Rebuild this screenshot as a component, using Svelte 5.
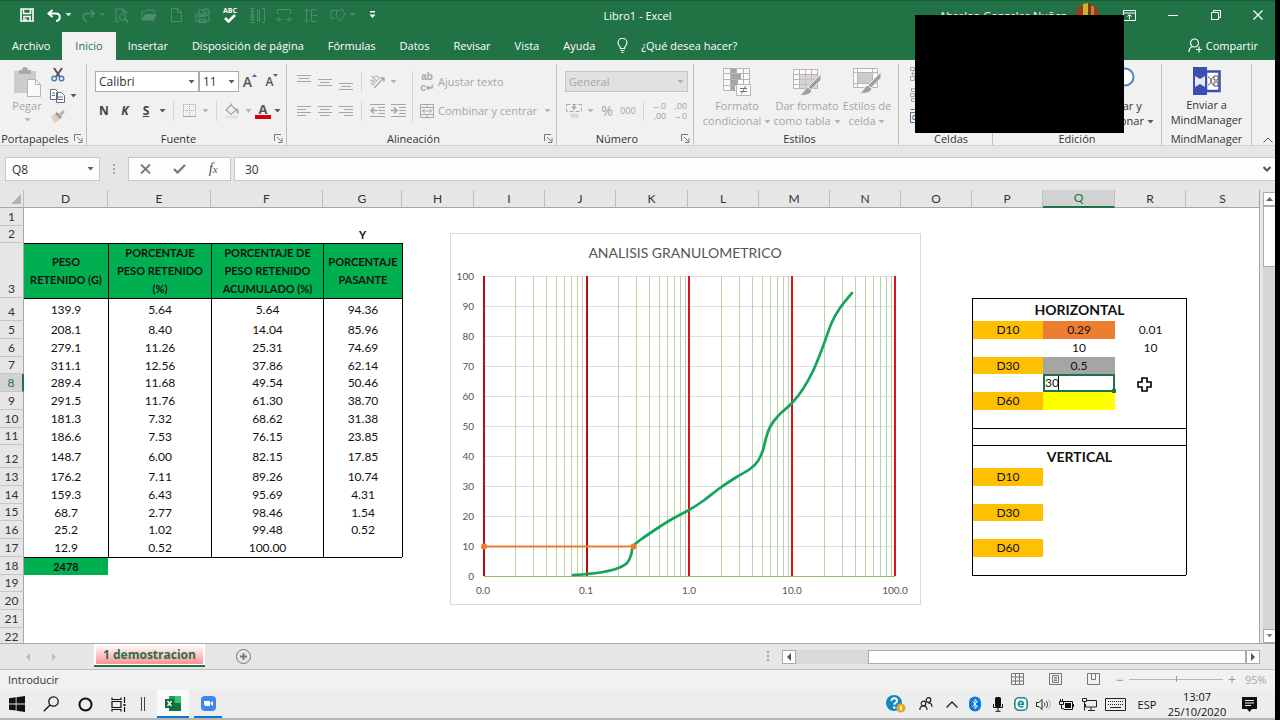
<script lang="ts">
  type Cell = { text?: string; cls?: string; span?: number; edit?: boolean };
  type Row = { n: number; h: number; cells: Record<string, Cell> };

  const tabs = ['Archivo', 'Inicio', 'Insertar', 'Disposición de página', 'Fórmulas', 'Datos', 'Revisar', 'Vista', 'Ayuda'];

  const columns = [
    { id: 'D', w: 84 },
    { id: 'E', w: 103 },
    { id: 'F', w: 112 },
    { id: 'G', w: 79 },
    { id: 'H', w: 72 },
    { id: 'I', w: 71 },
    { id: 'J', w: 71 },
    { id: 'K', w: 72 },
    { id: 'L', w: 71 },
    { id: 'M', w: 71 },
    { id: 'N', w: 71 },
    { id: 'O', w: 71 },
    { id: 'P', w: 71 },
    { id: 'Q', w: 72 },
    { id: 'R', w: 71 },
    { id: 'S', w: 74 }
  ];

  const heights = [18, 17, 55, 23, 18, 18, 17, 18, 18, 18, 17, 23, 18, 18, 17, 18, 18, 18, 17, 18, 18, 18];

  const data = [
    ['139.9', '5.64', '5.64', '94.36'],
    ['208.1', '8.40', '14.04', '85.96'],
    ['279.1', '11.26', '25.31', '74.69'],
    ['311.1', '12.56', '37.86', '62.14'],
    ['289.4', '11.68', '49.54', '50.46'],
    ['291.5', '11.76', '61.30', '38.70'],
    ['181.3', '7.32', '68.62', '31.38'],
    ['186.6', '7.53', '76.15', '23.85'],
    ['148.7', '6.00', '82.15', '17.85'],
    ['176.2', '7.11', '89.26', '10.74'],
    ['159.3', '6.43', '95.69', '4.31'],
    ['68.7', '2.77', '98.46', '1.54'],
    ['25.2', '1.02', '99.48', '0.52'],
    ['12.9', '0.52', '100.00', '']
  ];

  const rows: Row[] = heights.map((h, i) => ({ n: i + 1, h, cells: {} }));

  function put(ref: string, cell: Cell) {
    const row = rows[Number(ref.slice(1)) - 1];
    row.cells[ref[0]] = { ...row.cells[ref[0]], ...cell };
  }

  put('G2', { text: 'Y', cls: 'bold' });
  put('D3', { text: 'PESO RETENIDO (G)', cls: 'head' });
  put('E3', { text: 'PORCENTAJE PESO RETENIDO (%)', cls: 'head line-l' });
  put('F3', { text: 'PORCENTAJE DE PESO RETENIDO ACUMULADO (%)', cls: 'head line-l' });
  put('G3', { text: 'PORCENTAJE PASANTE', cls: 'head line-l' });
  put('H3', { cls: 'line-l' });

  data.forEach((values, i) => {
    const top = i === 0 ? ' line-t' : '';
    values.forEach((text, c) => put('DEFG'[c] + (i + 4), { text, cls: (c ? 'line-l' : '') + top }));
    put('H' + (i + 4), { cls: 'line-l' });
  });
  put('D18', { text: '2478', cls: 'total line-t' });
  for (const c of 'EFG') put(c + '18', { cls: 'line-t' });

  for (let n = 4; n <= 18; n++) {
    put('P' + n, { cls: 'line-l' });
    put('S' + n, { cls: 'line-l' });
  }
  for (const n of [11, 19]) for (const c of 'PQR') put(c + n, { cls: n === 11 && c === 'P' ? 'line-l line-t' : 'line-t' });
  put('P4', { text: 'HORIZONTAL', cls: 'title line-l line-t', span: 3 });
  put('P12', { text: 'VERTICAL', cls: 'title line-l line-t', span: 3 });
  for (const ref of ['P5', 'P7', 'P9', 'P13', 'P15', 'P17']) {
    const label = { 5: 'D10', 7: 'D30', 9: 'D60', 13: 'D10', 15: 'D30', 17: 'D60' }[ref.slice(1)];
    put(ref, { text: label, cls: 'gold line-l' });
  }
  put('Q5', { text: '0.29', cls: 'orange' });
  put('R5', { text: '0.01' });
  put('Q6', { text: '10' });
  put('R6', { text: '10' });
  put('Q7', { text: '0.5', cls: 'gray' });
  put('Q8', { edit: true, cls: 'edit' });
  put('Q9', { cls: 'yellow' });

  function visible(row: Row) {
    const out: { id: string; cell: Cell }[] = [];
    for (let i = 0; i < columns.length; i++) {
      const cell = row.cells[columns[i].id] ?? {};
      out.push({ id: columns[i].id, cell });
      if (cell.span) i += cell.span - 1;
    }
    return out;
  }

  // chart geometry: log x axis from 0.01 to 100, linear y axis 0..100
  const plot = { left: 34, top: 43, decade: 103, height: 300 };
  const right = plot.left + plot.decade * 4 - 1;
  const bottom = plot.top + plot.height;
  const yTicks = [0, 10, 20, 30, 40, 50, 60, 70, 80, 90, 100];
  const xTicks = ['0.0', '0.1', '1.0', '10.0', '100.0'];
  const minor = [0, 1, 2, 3].flatMap((d) =>
    [2, 3, 4, 5, 6, 7, 8, 9].map((m) => Math.round(plot.left + (d + Math.log10(m)) * plot.decade))
  );
  const curve = [
    [123, 342], [137, 341], [153, 339], [167, 335.5], [177, 330], [181, 322], [183.3, 313], [191, 306.5],
    [207, 295.5], [223, 285.5], [239, 277], [253, 268], [270, 255], [285, 245], [300, 236], [308, 228],
    [313, 217], [316, 205], [320, 194], [328, 183], [342, 170], [353, 156], [363, 138], [372, 116],
    [382, 89], [390, 75], [402, 60]
  ];

  function smooth(points: number[][]) {
    let d = `M${points[0].join(' ')}`;
    for (let i = 0; i < points.length - 1; i++) {
      const p0 = points[i - 1] ?? points[i];
      const p1 = points[i];
      const p2 = points[i + 1];
      const p3 = points[i + 2] ?? p2;
      d += `C${p1[0] + (p2[0] - p0[0]) / 6} ${p1[1] + (p2[1] - p0[1]) / 6} ${p2[0] - (p3[0] - p1[0]) / 6} ${p2[1] - (p3[1] - p1[1]) / 6} ${p2[0]} ${p2[1]}`;
    }
    return d;
  }
</script>

{#snippet caret(cls = '')}
  <svg class="caret {cls}" width="7" height="4" viewBox="0 0 7 4"><path d="M0.5 0h6L3.5 3.5z" fill="currentColor" /></svg>
{/snippet}

{#snippet launcher()}
  <button class="launcher" aria-label="Más opciones">
    <svg width="9" height="9" viewBox="0 0 9 9" fill="none" stroke="currentColor"><path d="M0.5 7V0.5H7M3 3l4.5 4.5M8 4v4.5H4" /></svg>
  </button>
{/snippet}

{#snippet lines(y: number, rows: number[][])}
  <svg width="16" height="18" viewBox="0 0 16 18" stroke="currentColor">
    {#each rows as [from, to], i}
      <path d="M{from} {y + i * 3 + 0.5}H{to}" />
    {/each}
  </svg>
{/snippet}

<div class="screen">
  <div class="window">
    <header class="titlebar">
      <div class="quick">
        <button aria-label="Guardar"><svg width="14" height="14" viewBox="0 0 14 14" fill="none" stroke="#fff" stroke-width="1.6"><path d="M1 1h12v12H1zM3.5 1v4.500h7V1M4 13V8.500h6V13M6 10.500v2" /></svg></button>
        <span class="pair">
          <button aria-label="Deshacer"><svg width="15" height="13" viewBox="0 0 15 13" fill="none" stroke="#fff" stroke-width="2"><path d="M5.500 1L1.500 4.500l4 3.500M2 4.500h7c5 0 5 7 0 7.500" /></svg></button>
          {@render caret()}
        </span>
        <span class="pair faded">
          <button aria-label="Rehacer"><svg width="15" height="13" viewBox="0 0 15 13" fill="none" stroke="currentColor" stroke-width="1.6"><path d="M9.500 1l4 3.500-4 3.500M13 4.500H6c-5 0-5 7 0 7.500" /></svg></button>
          {@render caret()}
        </span>
        <button class="faded" aria-label="Vista previa"><svg width="14" height="15" viewBox="0 0 14 15" fill="none" stroke="currentColor" stroke-width="1.200"><path d="M4 13.500H1V1h7l3 3v2M8 1v3h3" /><circle cx="7.500" cy="9" r="3" /><path d="M9.500 11l3.500 3" stroke-width="2" /></svg></button>
        <button class="faded" aria-label="Abrir"><svg width="16" height="12" viewBox="0 0 16 12"><path d="M1 11V2h4l1-1h7v3" fill="none" stroke="currentColor" /><path d="M1 11.500L4 5h11.500L13 11.500z" fill="currentColor" /></svg></button>
        <button class="faded" aria-label="Nuevo"><svg width="11" height="14" viewBox="0 0 11 14" fill="none" stroke="currentColor"><path d="M0.500 0.500h6l4 4v9h-10zM6.500 0.500v4h4" /></svg></button>
        <button class="faded" aria-label="Imprimir"><svg width="16" height="15" viewBox="0 0 16 15" fill="none" stroke="currentColor" stroke-width="1.200"><path d="M4 6V2h4M1 6h10l3 2v5H1zM4 11h7v3.500H4z" /><path d="M3 8h7" stroke-width="2" /><circle cx="11" cy="4" r="3.200" /><path d="M9.500 4l1 1 2-2" /></svg></button>
        <button class="abc" aria-label="Ortografía">
          <span>ABC</span>
          <svg width="12" height="9" viewBox="0 0 12 9" fill="none" stroke="#fff" stroke-width="2.600"><path d="M1 4l3.500 3.500L11 1" /></svg>
        </button>
        <button class="faded" aria-label="Alto de fila"><svg width="16" height="15" viewBox="0 0 16 15" fill="none" stroke="currentColor"><path d="M1 0.500h5M1 14.500h5M3.500 2v11M2 4l1.500-2L5 4M2 11l1.500 2L5 11M2 6.500h3v3H2zM8.500 2h2v11h-2zM12.500 0.500h3v14h-3" /></svg></button>
        <button class="faded" aria-label="Ancho"><svg width="16" height="15" viewBox="0 0 16 15" fill="none" stroke="currentColor"><path d="M1.500 6V1.500h13V6M1 11.500h5M3.500 9L1 11.500 3.500 14M10 11.500h5M12.500 9l2.500 2.500-2.500 2.500" /></svg></button>
        <button class="faded" aria-label="Alto"><svg width="16" height="15" viewBox="0 0 16 15" fill="none" stroke="currentColor"><path d="M3.500 1v13M1 3.500L3.500 1 6 3.500M1 11.500L3.500 14 6 11.500M14 1.500H8.500v12H14M10 7.500h4" /></svg></button>
        <span class="pair faded">
          <button aria-label="Formas"><svg width="16" height="15" viewBox="0 0 16 15" fill="none" stroke="currentColor"><path d="M5 10.500H1v-8h7M7 3l5-2 3 5-5 7-4-5z" /></svg></button>
          {@render caret()}
        </span>
        <button aria-label="Personalizar"><svg width="7" height="8" viewBox="0 0 7 8" fill="#fff"><path d="M1 0h5v1.500H1zM0.500 3.500h6l-3 3.500z" /></svg></button>
      </div>
      <h1>Libro1 - Excel</h1>
      <div class="account">
        <span class="name">Absalon Gonzales Nuñez</span>
        <svg class="avatar" width="23" height="24" viewBox="0 0 23 24"><circle cx="11.500" cy="12" r="11.500" fill="#a5361c" /><path d="M7 1l5-1v22H7z" fill="#c8b432" /><path d="M12 0l5 2v20h-5z" fill="#7a3a10" /><path d="M15 2l3 2v14h-3z" fill="#b08a22" /></svg>
        <button aria-label="Opciones de presentación de la cinta"><svg width="13" height="11" viewBox="0 0 13 11" fill="none" stroke="#fff"><path d="M0.500 0.500h12v10H0.500zM0.500 3h12M6.500 9.500V5M4.500 6.500l2-2 2 2" /></svg></button>
        <button aria-label="Minimizar"><svg width="10" height="10" viewBox="0 0 10 10" stroke="#fff"><path d="M0 5.500h10" /></svg></button>
        <button aria-label="Restaurar"><svg width="10" height="10" viewBox="0 0 10 10" fill="none" stroke="#fff"><path d="M0.500 2.500h7v7h-7zM2.500 2.500v-2h7v7h-2" /></svg></button>
        <button aria-label="Cerrar"><svg width="10" height="10" viewBox="0 0 10 10" stroke="#fff" stroke-width="1.200"><path d="M0.500 0.500l9 9M9.500 0.500l-9 9" /></svg></button>
      </div>
    </header>

    <nav class="tabs">
      {#each tabs as tab}
        <button class:active={tab === 'Inicio'}>{tab}</button>
      {/each}
      <button class="tell">
        <svg width="11" height="15" viewBox="0 0 11 15" fill="none" stroke="#fff" stroke-width="1.100"><path d="M3.500 10.500C3.500 8 1 7.500 1 4.800a4.400 4.400 0 0 1 9 0c0 2.700-2.500 3.200-2.500 5.700zM3.500 12.500h4M4.500 14.500h2" /></svg>
        ¿Qué desea hacer?
      </button>
      <button class="share">
        <svg width="14" height="15" viewBox="0 0 14 15" fill="none" stroke="#fff" stroke-width="1.200"><circle cx="6.500" cy="5" r="4" /><path d="M1 14c0-3 1.500-5 4-5.500M11 8.500v6M8 11.500h6" /></svg>
        Compartir
      </button>
    </nav>

    <section class="ribbon">
      <div class="group clipboard">
        <div class="body">
          <button class="paste">
            <svg width="29" height="31" viewBox="0 0 29 31"><path d="M1 4h22v22H1z" fill="#cfcacd" /><path d="M6 3h3a3 3 0 0 1 6 0h3v4H6z" fill="#a9a9a9" /><path d="M14.500 12.500h8l5 5v12h-13z" fill="#fafafa" stroke="#b5b5b5" /><path d="M22.500 12.500v5h5" fill="none" stroke="#b5b5b5" /></svg>
            <span>Pegar</span>
            {@render caret()}
          </button>
          <div class="stack">
            <button aria-label="Cortar"><svg width="14" height="15" viewBox="0 0 14 15" fill="none" stroke-width="1.400"><path d="M3 1l6 9M11 1L5 10" stroke="#555" stroke-width="2" /><circle cx="3.200" cy="11.500" r="2.300" stroke="#4a7ab0" /><circle cx="10.500" cy="11.500" r="2.300" stroke="#4a7ab0" /></svg></button>
            <span class="pair">
              <button aria-label="Copiar"><svg width="15" height="14" viewBox="0 0 15 14" fill="#fff" stroke="#5f6b78"><path d="M0.500 0.500h5l2 2v8h-7zM2 4h3M2 6.500h3M6.500 3.500h5l3 3v7h-8z" /><path d="M8 8h5M8 10.500h5" /></svg></button>
              {@render caret()}
            </span>
            <button aria-label="Copiar formato"><svg width="15" height="13" viewBox="0 0 15 13"><path d="M1 6l4-2 5 5-3 3-3 1z" fill="#e3cfc0" /><path d="M5 4l2-2 5 5-2 2z" fill="#9a9a9a" /><path d="M9 4l4-4 2 2-4 4z" fill="#b5b5b5" /></svg></button>
          </div>
        </div>
        <footer><span>Portapapeles</span>{@render launcher()}</footer>
      </div>

      <div class="group font">
        <div class="body rows">
          <div class="line">
            <label class="combo family"><select aria-label="Fuente"><option>Calibri</option></select>{@render caret()}</label>
            <label class="combo size"><select aria-label="Tamaño"><option>11</option></select>{@render caret()}</label>
            <button class="grow" aria-label="Aumentar tamaño"><b>A</b><svg width="5" height="3" viewBox="0 0 5 3"><path d="M0 3h5L2.500 0z" fill="#3f6da5" /></svg></button>
            <button class="grow small" aria-label="Disminuir tamaño"><b>A</b><svg width="5" height="3" viewBox="0 0 5 3"><path d="M0 0h5L2.500 3z" fill="#3f6da5" /></svg></button>
          </div>
          <div class="line tools">
            <button class="letter">N</button>
            <button class="letter italic">K</button>
            <button class="letter under">S</button>
            {@render caret()}
            <i class="sep"></i>
            <button class="off" aria-label="Bordes"><svg width="13" height="13" viewBox="0 0 13 13" fill="none" stroke="currentColor"><path d="M0.500 0.500h12v12M0.500 0.500v12M6.500 0v12M0 6.500h12" stroke-dasharray="1 1" /><path d="M0 12.500h13" /></svg></button>
            {@render caret('off')}
            <i class="sep"></i>
            <button class="off" aria-label="Color de relleno"><svg width="16" height="16" viewBox="0 0 16 16" fill="none" stroke="currentColor" stroke-width="1.300"><path d="M2 7l5-5 5 5-5 4.500zM7 2V0.500" /><path d="M12 6c2 1 2 3 1.500 4.500" stroke-width="2" /><path d="M1 14h13" stroke="#e2e2e2" stroke-width="3" /></svg></button>
            {@render caret('off')}
            <button class="color"><b>A</b></button>
            {@render caret()}
          </div>
        </div>
        <footer><span>Fuente</span>{@render launcher()}</footer>
      </div>

      <div class="group align off">
        <div class="body">
          <div class="rows">
            <div class="line tools">
              <button aria-label="Alinear arriba">{@render lines(2, [[1, 15], [3, 13], [1, 15]])}</button>
              <button aria-label="Alinear en medio">{@render lines(6, [[1, 15], [3, 13], [1, 15]])}</button>
              <button aria-label="Alinear abajo">{@render lines(10, [[1, 15], [3, 13], [1, 15]])}</button>
              <i class="sep"></i>
              <button class="turn" aria-label="Orientación"><span>ab</span><svg width="15" height="15" viewBox="0 0 15 15" fill="none" stroke="currentColor" stroke-width="1.300"><path d="M4 14L14 4M10 4h4v4" /></svg></button>
              {@render caret()}
            </div>
            <div class="line tools">
              <button aria-label="Izquierda">{@render lines(4, [[1, 15], [1, 10], [1, 15], [1, 10]])}</button>
              <button aria-label="Centrar">{@render lines(4, [[1, 15], [3, 13], [1, 15], [3, 13]])}</button>
              <button aria-label="Derecha">{@render lines(4, [[1, 15], [6, 15], [1, 15], [6, 15]])}</button>
              <i class="sep"></i>
              <button aria-label="Disminuir sangría"><svg width="15" height="13" viewBox="0 0 15 13" fill="none" stroke="currentColor"><path d="M0 0.500h15M8 3.500h7M8 6.500h7M8 9.500h7M0 12.500h15" /><path d="M7 6.500H1M4 3.500l-3 3 3 3" stroke-width="1.500" /></svg></button>
              <button aria-label="Aumentar sangría"><svg width="15" height="13" viewBox="0 0 15 13" fill="none" stroke="currentColor"><path d="M0 0.500h15M8 3.500h7M8 6.500h7M8 9.500h7M0 12.500h15" /><path d="M0 6.500h6M3 3.500l3 3-3 3" stroke-width="1.500" /></svg></button>
            </div>
          </div>
          <i class="sep tall"></i>
          <div class="rows texts">
            <button class="wide"><span class="wrap">ab<br />c↵</span>Ajustar texto</button>
            <button class="wide"><svg width="14" height="14" viewBox="0 0 14 14" fill="none" stroke="currentColor"><path d="M0.500 0.500h13v13H0.500zM0.500 3.500h13M0.500 10.500h13M7 0.500v3M7 10.500v3M2.500 7h9M4.500 5l-2 2 2 2M9.500 5l2 2-2 2" /></svg>Combinar y centrar<span class="gap">{@render caret()}</span></button>
          </div>
        </div>
        <footer><span>Alineación</span>{@render launcher()}</footer>
      </div>

      <div class="group number off">
        <div class="body rows">
          <label class="combo general"><select aria-label="Formato de número" disabled><option>General</option></select>{@render caret()}</label>
          <div class="line tools">
            <button aria-label="Moneda"><svg width="16" height="14" viewBox="0 0 16 14" fill="none" stroke="currentColor"><path d="M0.500 0.500h15v7H0.500z" stroke-dasharray="4 2" /><path d="M8 2v4M6 4l2-2 2 2" stroke-width="1.500" /><path d="M4 10.500h8M5 12.500h8" stroke="#dadada" stroke-width="2" /></svg></button>
            {@render caret()}
            <button class="percent">%</button>
            <button class="zeros">000</button>
            <i class="sep"></i>
            <button class="decimals" aria-label="Aumentar decimales"><span>←0</span><span>,00</span></button>
            <button class="decimals" aria-label="Disminuir decimales"><span>,00</span><span>→0</span></button>
          </div>
        </div>
        <footer><span>Número</span>{@render launcher()}</footer>
      </div>

      <div class="group styles off">
        <div class="body">
          <button class="big">
            <svg width="29" height="29" viewBox="0 0 29 29" fill="#fafafa" stroke="#bcb3ba"><path d="M0.500 1.500h26v22H0.500zM0.500 6.500h26M0.500 12.500h26M0.500 18.500h26M7.500 1v22M13.500 1v22M20.500 1v22" /><path d="M8 2h5v4H8zM8 7h10v5H8zM8 13h7v5H8zM8 19h4v4H8z" fill="#a5a5a8" stroke="none" /><path d="M13.500 17.500h14v11h-14z" /><path d="M17 21.500h7M17 24.500h7M22.500 19l-4 8" stroke="#777" /></svg>
            <span>Formato<br />condicional {@render caret()}</span>
          </button>
          <button class="big mid">
            <svg width="29" height="29" viewBox="0 0 29 29" fill="#fafafa" stroke="#bcb3ba"><path d="M0.500 2.500h24v19H0.500zM0.500 7.500h24M0.500 12.500h24M0.500 17.500h24M6.500 2v19M12.500 2v19M18.500 2v19" /><path d="M7 8h17v13H7z" fill="#c9c3c9" fill-opacity=".7" stroke="none" /><path d="M28 7v6L18 23l-3-3z" fill="#a0a0a0" stroke="#f1f1f1" /><path d="M15 20l4 4c-2 4-7 5-12 4 4-2 4-7 8-8z" fill="#a0a0a0" stroke="#f1f1f1" /></svg>
            <span>Dar formato<br />como tabla {@render caret()}</span>
          </button>
          <button class="big last">
            <svg width="29" height="29" viewBox="0 0 29 29" fill="#fafafa" stroke="#bcb3ba"><path d="M0.500 1.500h24v19H0.500zM0.500 5.500h24M0.500 16.500h24M4.500 1v19M19.500 1v19" /><path d="M5 6h14v10H5z" fill="#cfcacf" stroke="none" /><path d="M28 5v6L18 21l-3-3z" fill="#a0a0a0" stroke="#f1f1f1" /><path d="M15 18l4 4c-2 4-7 5-12 4 4-2 4-7 8-8z" fill="#a0a0a0" stroke="#f1f1f1" /></svg>
            <span>Estilos de<br />celda {@render caret()}</span>
          </button>
        </div>
        <footer><span>Estilos</span></footer>
      </div>

      <div class="group cells">
        <div class="body">
          <div class="stack">
            <button class="off" aria-label="Insertar celdas"><svg width="14" height="14" viewBox="0 0 14 14" fill="none" stroke="currentColor"><path d="M0.500 0.500h4v3h-4zM0.500 9.500h4v4h-4zM2 6.500h8M4 4L1.500 6.500 4 9" /></svg></button>
            <button class="off" aria-label="Eliminar celdas"><svg width="14" height="14" viewBox="0 0 14 14" fill="none" stroke="currentColor"><path d="M1.500 0.500h4v3h-4zM0.500 5.500h4v3h-4zM1.500 10.500h4v3h-4z" /></svg></button>
            <button aria-label="Formato de celdas"><svg width="14" height="14" viewBox="0 0 14 14" fill="none" stroke="#4f6f8f"><path d="M0.500 0.500h5M0.500 3.500h13v10H0.500zM3 6.500h8v4H3z" /></svg></button>
          </div>
        </div>
        <footer><span>Celdas</span></footer>
      </div>

      <div class="group editing">
        <div class="body">
          <button class="big">
            <svg width="29" height="29" viewBox="0 0 29 29" fill="#fff" stroke="#4f86c6" stroke-width="2"><circle cx="19" cy="10" r="8.500" /><path d="M13 16L3 27" /></svg>
            <span>Buscar y<br />seleccionar {@render caret()}</span>
          </button>
        </div>
        <footer><span>Edición</span></footer>
      </div>

      <div class="group mind">
        <div class="body">
          <button class="big">
            <svg width="28" height="28" viewBox="0 0 28 28"><path d="M13 4.500h13.500v19.500H13z" fill="#fff" stroke="#3a4fb0" stroke-width="2.500" /><path d="M0 0h14v28H0z" fill="#3a4fb0" /><path d="M2 9l5 3 5-3v11l-5-3-5 3z" fill="#e6e8f2" /><path d="M15 10c4 0 2 8 6 8M15 18c4 0 2-8 6-8M21 9h4v4h-4zM21 15h4v4h-4z" fill="none" stroke="#555" /></svg>
            <span>Enviar a<br />MindManager</span>
          </button>
        </div>
        <footer><span>MindManager</span></footer>
      </div>
      <div class="tail">
        <button aria-label="Contraer la cinta"><svg width="10" height="6" viewBox="0 0 10 6" fill="none" stroke="#555"><path d="M0.500 5.500l4.500-4.500 4.500 4.500" /></svg></button>
      </div>
    </section>

    <section class="formula">
      <label class="namebox"><input aria-label="Cuadro de nombres" value="Q8" />{@render caret()}</label>
      <span class="dots"></span>
      <div class="fx">
        <button aria-label="Cancelar"><svg width="11" height="10" viewBox="0 0 11 10" stroke="#777" stroke-width="1.800"><path d="M1 0.500l9 9M10 0.500l-9 9" /></svg></button>
        <button aria-label="Introducir"><svg width="13" height="10" viewBox="0 0 13 10" fill="none" stroke="#777" stroke-width="2.200"><path d="M1 5l3.500 3.500L12 1" /></svg></button>
        <button class="fn"><i>f<sub>x</sub></i></button>
      </div>
      <label class="bar">
        <input aria-label="Barra de fórmulas" value="30" />
        <svg width="8" height="6" viewBox="0 0 8 6" fill="none" stroke="#555" stroke-width="2"><path d="M0.500 1L4 4.500 7.500 1" /></svg>
      </label>
    </section>

    <main class="sheet">
      <div class="grid">
        <table>
          <colgroup>
            <col class="corner-col" />
            {#each columns as col}<col style="width: {col.w}px" />{/each}
          </colgroup>
          <thead>
            <tr>
              <th class="corner"><svg width="10" height="10" viewBox="0 0 10 10"><path d="M10 0v10H0z" fill="#b4b4b4" /></svg></th>
              {#each columns as col}<th class:current={col.id === 'Q'}>{col.id}</th>{/each}
            </tr>
          </thead>
          <tbody>
            {#each rows as row}
              <tr style="height: {row.h}px">
                <th class:current={row.n === 8}>{row.n}</th>
                {#each visible(row) as { cell }}
                  <td class={cell.cls} colspan={cell.span ?? 1}>
                    {#if cell.edit}
                      <div class="editor"><input aria-label="Celda Q8" value="30" /><i></i></div>
                    {:else}{cell.text ?? ''}{/if}
                  </td>
                {/each}
              </tr>
            {/each}
          </tbody>
        </table>

        <svg class="chart" width="471" height="372" viewBox="0 0 471 372" role="img" aria-label="Analisis granulometrico">
          <rect x="0.500" y="0.500" width="470" height="371" fill="#fff" stroke="#d9d9d9" />
          <text class="chart-title" x="235" y="25" text-anchor="middle">ANALISIS GRANULOMETRICO</text>
          {#each yTicks as t}
            <path d="M{plot.left} {bottom - t * 3 + 0.5}H{right}" stroke={t ? '#dedede' : '#8fbf5f'} />
            <text x="24" y={bottom - t * 3 + 4} text-anchor="end">{t}</text>
          {/each}
          {#each minor as x}
            <path d="M{x + 0.5} {plot.top}V{bottom}" stroke="#bdd3a6" />
          {/each}
          {#each xTicks as label, i}
            <path d="M{plot.left + i * plot.decade - (i > 1 ? 1 : 0)} {plot.top}V{bottom}" stroke={i < 2 ? '#b01015' : '#d9141a'} stroke-width="2" />
            <text x={plot.left + i * plot.decade - 1} y="361" text-anchor="middle">{label}</text>
          {/each}
          <path d={smooth(curve)} fill="none" stroke="#14a45c" stroke-width="2.700" stroke-linecap="round" />
          <path d="M34 313.500H183" stroke="#ed7d31" stroke-width="2" />
          <circle cx="34" cy="313.500" r="3" fill="#ed7d31" />
          <circle cx="183.500" cy="313.500" r="3" fill="#ed7d31" />
        </svg>
        <svg class="cursor" width="15" height="15" viewBox="0 0 15 15"><path d="M5 1h5v4h4v5h-4v4H5v-4H1V5h4z" fill="#fff" stroke="#000" stroke-width="1.600" /></svg>
      </div>
      <div class="vscroll">
        <button aria-label="Subir"><svg width="7" height="4" viewBox="0 0 7 4"><path d="M0 4h7L3.500 0z" fill="#666" /></svg></button>
        <div class="track"><div class="thumb"></div></div>
        <button aria-label="Bajar">{@render caret()}</button>
      </div>
    </main>

    <section class="sheetbar">
      <div class="arrows">
        <button aria-label="Hoja anterior"><svg width="4" height="8" viewBox="0 0 4 8"><path d="M4 0v8L0 4z" fill="#bcbcbc" /></svg></button>
        <button aria-label="Hoja siguiente"><svg width="4" height="8" viewBox="0 0 4 8"><path d="M0 0v8l4-4z" fill="#bcbcbc" /></svg></button>
      </div>
      <button class="sheettab"><span>1 demostracion</span></button>
      <button class="add" aria-label="Hoja nueva"><svg width="15" height="15" viewBox="0 0 15 15" fill="none" stroke="#777"><circle cx="7.500" cy="7.500" r="7" /><path d="M7.500 4v7M4 7.500h7" stroke-width="1.800" /></svg></button>
      <span class="dots push"></span>
      <div class="hscroll">
        <button aria-label="Izquierda"><svg width="4" height="8" viewBox="0 0 4 8"><path d="M4 0v8L0 4z" fill="#555" /></svg></button>
        <div class="track"><div class="thumb"></div></div>
        <button aria-label="Derecha"><svg width="4" height="8" viewBox="0 0 4 8"><path d="M0 0v8l4-4z" fill="#555" /></svg></button>
      </div>
    </section>

    <section class="status">
      <span class="mode">Introducir</span>
      <button aria-label="Normal"><svg width="13" height="12" viewBox="0 0 13 12" fill="none" stroke="#777"><path d="M0.500 0.500h12v11H0.500zM0.500 4h12M0.500 8h12M4.500 0.500v11M8.500 0.500v11" /></svg></button>
      <button aria-label="Diseño de página"><svg width="13" height="12" viewBox="0 0 13 12" fill="none" stroke="#777"><path d="M0.500 0.500h12v11H0.500zM3.500 2.500h6v7h-6zM5 4.500h3M5 6h3M5 7.500h3" /></svg></button>
      <button aria-label="Saltos de página"><svg width="13" height="12" viewBox="0 0 13 12" fill="none" stroke="#777"><path d="M0.500 0.500h12v11H0.500zM4.500 0.500v6M8.500 0.500v6M4.500 6.500h4" /></svg></button>
      <div class="zoom">
        <button aria-label="Alejar">−</button>
        <input type="range" aria-label="Zoom" min="10" max="190" value="100" />
        <button aria-label="Acercar">+</button>
      </div>
      <span class="level">95%</span>
    </section>

    <footer class="taskbar">
      <button aria-label="Inicio"><svg width="16" height="16" viewBox="0 0 16 16" fill="#111"><path d="M0 2.300L6.700 1.300v6.200H0zM7.500 1.200L16 0v7.500H7.500zM0 8.400h6.700v6.200L0 13.700zM7.500 8.400H16V16l-8.500-1.200z" /></svg></button>
      <button aria-label="Buscar"><svg width="16" height="16" viewBox="0 0 16 16" fill="none" stroke="#111" stroke-width="1.300"><circle cx="10.500" cy="5.500" r="4.700" /><path d="M7 9L0.800 15.200" /></svg></button>
      <button aria-label="Cortana"><svg width="15" height="15" viewBox="0 0 15 15" fill="none" stroke="#111" stroke-width="2"><circle cx="7.500" cy="7.500" r="6" /></svg></button>
      <button class="narrow" aria-label="Vista de tareas"><svg width="16" height="15" viewBox="0 0 16 15" fill="none" stroke="#111" stroke-width="1.200"><path d="M1 0.500v2h9v-2M1 14.500v-2h9v2M1 4.500h9v6H1zM13.500 0v6M13.500 10v5" /><path d="M12.500 7h2v2h-2z" fill="#111" stroke="none" /></svg></button>
      <i class="bars"></i>
      <button class="app open" aria-label="Excel"><svg width="16" height="15" viewBox="0 0 16 15"><path d="M4 0h12v15H4z" fill="#1d9d5c" /><path d="M10 0h6v7h-6z" fill="#35c481" /><path d="M4 7h12v8H4z" fill="#15733f" /><path d="M0 3h9v9H0z" fill="#0f6b3a" /><path d="M2.500 5l4 5M6.500 5l-4 5" stroke="#fff" stroke-width="1.400" /></svg></button>
      <button class="app" aria-label="Zoom"><svg width="15" height="15" viewBox="0 0 15 15"><rect width="15" height="15" rx="4" fill="#3f86ee" /><path d="M3 5h6v5H4.500L3 9zM9.500 7L12 5v5L9.500 8z" fill="#fff" /></svg></button>
      <div class="tray">
        <button class="help" aria-label="Ayuda"><svg width="20" height="18" viewBox="0 0 20 18"><circle cx="8" cy="8" r="8" fill="#1487c0" /><path d="M5.500 6c0-4 6-3.500 5.500 0-.3 1.800-2.700 1.700-2.700 3.700" fill="none" stroke="#fff" stroke-width="2" /><circle cx="8.300" cy="12.500" r="1.200" fill="#fff" /><circle cx="15" cy="13" r="4.600" fill="#e8ab2e" /><path d="M15 11v4" stroke="#fff" stroke-width="1.500" /></svg></button>
        <button class="people" aria-label="Contactos"><svg width="14" height="14" viewBox="0 0 14 14" fill="none" stroke="#222" stroke-width="1.200"><circle cx="4.500" cy="6.500" r="2.300" /><circle cx="9.500" cy="3" r="2.300" /><path d="M0.800 13c0-5.500 7.200-5.500 7.200 0M9 5.800c2.500 0 4 1.500 4 4" /></svg></button>
        <button class="up" aria-label="Iconos ocultos"><svg width="12" height="7" viewBox="0 0 12 7" fill="none" stroke="#222" stroke-width="1.300"><path d="M0.500 6.500L6 1l5.500 5.500" /></svg></button>
        <button aria-label="Bluetooth"><svg width="12" height="16" viewBox="0 0 12 16"><rect y="0.500" width="12" height="15" rx="6" fill="#0a78e0" /><path d="M3.500 5.500l5 5L6 12.500v-9l2.500 2-5 5" fill="none" stroke="#fff" /></svg></button>
        <button aria-label="Micrófono"><svg width="10" height="15" viewBox="0 0 10 15"><rect x="2" width="6" height="10" rx="1.500" fill="#111" /><path d="M0.500 7v3.500h9V7M5 10.500V14M2.500 14.300h5" fill="none" stroke="#111" /></svg></button>
        <button aria-label="ESET"><svg width="14" height="14" viewBox="0 0 14 14" fill="none" stroke="#138a94"><rect x="0.800" y="0.800" width="12.400" height="12.400" rx="4" fill="#fff" stroke-width="1.600" /><path d="M4.300 7.200h5.200c.2-3.800-5.300-3.800-5.200 0 0 3 3.500 3.400 5 1.800" stroke-width="1.600" /></svg></button>
        <button aria-label="Volumen"><svg width="15" height="13" viewBox="0 0 15 13" fill="none" stroke="#222"><path d="M0.500 4.500h2.500L6 1.500v10L3 8.500H0.500zM8 4.500c1 1 1 3 0 4M10 3c2 2 2 5 0 7" /><path d="M12 1.500c3 3 3 7 0 10" stroke="#aaa" /></svg></button>
        <button aria-label="Batería"><svg width="15" height="12" viewBox="0 0 15 12"><path d="M6 5h6v5H6zM13.500 6H15v3h-1.500z" fill="#111" /><path d="M4.500 3.500h9v8h-9M1.500 1v2M3.500 1v2M0.500 3.500h4v3h-4zM2.500 6.500v4h2" fill="none" stroke="#111" /></svg></button>
        <button aria-label="Red"><svg width="15" height="13" viewBox="0 0 15 13" fill="none" stroke="#222"><path d="M5 2.500h9.500v6.500H3.500V6M9 9v3M6 12.500h7M0.500 0.500h4v3h-4zM2.500 3.500v9" /></svg></button>
        <button class="keys" aria-label="Teclado"><svg width="21" height="13" viewBox="0 0 21 13" fill="none" stroke="#222"><path d="M0.500 0.500h20v12H0.500z" /><path d="M3 3.500h15M3 6.500h15" stroke-dasharray="1 1" /><path d="M5 9.500h11" /></svg></button>
        <span class="lang">ESP</span>
        <span class="clock">13:07<br />25/10/2020</span>
        <button class="notes" aria-label="Notificaciones"><svg width="15" height="15" viewBox="0 0 15 15"><path d="M0 0h15v12H10l-2.500 3L5 12H0z" fill="#111" /><path d="M3 3.500h9M3 6h9M3 8.500h6" stroke="#eee" /></svg></button>
      </div>
    </footer>
    <div class="mask"></div>
  </div>
</div>

<style>
  :global(body) {
    margin: 0;
    background: #000;
  }

  .screen {
    box-sizing: border-box;
    height: 100vh;
    padding-right: 5px;
    background: #000;
    font-family: 'Open Sans', 'Noto Sans', sans-serif;
    font-size: 11px;
    line-height: 15px;
    color: #333;
  }

  .window {
    position: relative;
    display: flex;
    flex-direction: column;
    height: 100%;
    background: #e6e6e6;
  }

  button,
  input,
  select {
    box-sizing: border-box;
    margin: 0;
    padding: 0;
    border: none;
    background: transparent;
    color: inherit;
    font: inherit;
  }

  button {
    display: flex;
    align-items: center;
    justify-content: center;
    flex: none;
  }

  svg {
    display: block;
    flex: none;
  }

  .caret {
    opacity: 0.8;
  }

  .pair {
    display: flex;
    align-items: center;
  }

  .titlebar {
    display: grid;
    grid-template-columns: 1fr auto 1fr;
    align-items: center;
    height: 32px;
    flex: none;
    box-sizing: border-box;
    padding-bottom: 3px;
    border-top: 1px solid #1a5c38;
    background: #217346;
    color: #fff;
  }

  .quick {
    display: flex;
    align-items: center;
    gap: 5px;
    padding-left: 16px;
  }

  .quick button {
    width: 22px;
    height: 22px;
  }

  .faded {
    color: #4a8f6a;
  }

  .quick .abc {
    flex-direction: column;
    font-size: 7px;
    line-height: 7px;
    font-weight: 700;
  }

  h1 {
    margin: 0;
    font-size: 11px;
    font-weight: 400;
    white-space: nowrap;
  }

  .account {
    display: flex;
    align-items: center;
    justify-content: flex-end;
  }

  .account button {
    width: 43px;
    height: 28px;
  }

  .account button:last-child {
    width: 38px;
    padding-left: 4px;
  }

  .avatar {
    margin: 0 9px 0 10px;
  }

  .tabs {
    display: flex;
    height: 28px;
    flex: none;
    background: #217346;
    color: #fff;
  }

  .tabs button {
    padding: 0 12px 2px;
  }

  .tabs .active {
    padding: 0 13px 2px;
    background: #f1f1f1;
    color: #217346;
  }

  .tabs .tell {
    gap: 13px;
    padding-left: 10px;
  }

  .tabs .share {
    gap: 4px;
    margin-left: auto;
    padding-right: 17px;
  }

  .ribbon {
    display: flex;
    height: 86px;
    flex: none;
    box-sizing: border-box;
    padding-top: 4px;
    background: #f1f1f1;
    border-bottom: 1px solid #d2d2d2;
  }

  .group {
    box-sizing: border-box;
    display: flex;
    flex-direction: column;
    flex: none;
    border-right: 1px solid #c0c0c0;
  }

  .group .body {
    display: flex;
    flex: 1;
  }

  .group footer {
    display: flex;
    align-items: center;
    justify-content: center;
    height: 14px;
    position: relative;
    color: #333;
  }

  .launcher {
    position: absolute;
    right: 3px;
    top: 3px;
    color: #777;
  }

  .off {
    color: #a6a6a6;
  }

  .clipboard {
    width: 87px;
  }

  .clipboard footer,
  .font footer,
  .align footer,
  .number footer {
    padding-right: 16px;
  }

  .paste {
    flex-direction: column;
    justify-content: flex-start;
    width: 46px;
    margin-left: 4px;
    padding-top: 3px;
    color: #a6a6a6;
  }

  .paste .caret {
    margin-top: 5px;
  }

  .stack {
    display: flex;
    flex-direction: column;
    align-items: flex-start;
  }

  .stack button {
    height: 20px;
  }

  .clipboard .stack button {
    width: 15px;
    height: 21px;
  }

  .stack .pair {
    gap: 5px;
  }

  .font {
    width: 200px;
  }

  .group .rows {
    display: flex;
    flex-direction: column;
    gap: 8px;
    padding: 7px 0 0 8px;
  }

  .line {
    display: flex;
    align-items: center;
    height: 21px;
  }

  .tools {
    gap: 1px;
    margin-left: -1px;
  }

  .tools button {
    width: 20px;
    height: 21px;
  }

  .tools .caret {
    margin: 0 2px;
  }

  .sep {
    width: 1px;
    height: 20px;
    margin: 0 4px;
    background: #d4d4d4;
  }

  .combo {
    position: relative;
    display: block;
    height: 21px;
    color: #333;
    font-size: 12px;
  }

  .combo select {
    appearance: none;
    width: 100%;
    height: 21px;
    padding-left: 3px;
    border: 1px solid #ababab;
    background: #fff;
  }

  .combo .caret {
    position: absolute;
    right: 4px;
    top: 9px;
  }

  .family {
    width: 104px;
  }

  .size {
    width: 40px;
  }

  .general {
    width: 123px;
    color: #a6a6a6;
    font-size: 11px;
  }

  .general select {
    background: #e1e1e1;
    border-color: #c6c6c6;
    opacity: 1;
  }

  .grow {
    align-items: flex-start;
    width: 22px;
    font-size: 14px;
    color: #555;
  }

  .grow b {
    font-weight: 600;
  }

  .small {
    font-size: 12px;
  }

  .letter {
    font-size: 12px;
    font-weight: 700;
    color: #444;
  }

  .italic {
    font-style: italic;
  }

  .under {
    text-decoration: underline;
  }

  .tools .color {
    width: 16px;
    height: 16px;
    border-bottom: 4px solid #d80000;
    font-size: 13px;
    line-height: 12px;
    color: #555;
  }

  .align {
    width: 270px;
  }

  .tall {
    height: 52px;
    margin: 7px 0 0 4px;
  }

  .group .texts {
    padding-left: 7px;
  }

  .turn {
    position: relative;
  }

  .turn span {
    position: absolute;
    left: 1px;
    top: 1px;
    font-size: 10px;
    transform: rotate(-45deg);
  }

  .wide {
    justify-content: flex-start;
    height: 21px;
    gap: 4px;
  }

  .wrap {
    width: 14px;
    font-family: 'Liberation Sans', sans-serif;
    font-size: 10px;
    line-height: 11px;
    font-weight: 700;
  }

  .gap {
    padding-left: 3px;
  }

  .number {
    width: 137px;
  }

  .tools .percent {
    font-size: 14px;
  }

  .zeros {
    font-size: 9px;
  }

  .tools .decimals {
    flex-direction: column;
    align-items: flex-end;
    padding-right: 3px;
    font-family: 'Liberation Sans', sans-serif;
    font-size: 9px;
    line-height: 10px;
  }

  .styles {
    width: 205px;
    padding-left: 7px;
  }

  .big {
    flex-direction: column;
    justify-content: flex-start;
    width: 72px;
    padding-top: 3px;
    gap: 2px;
    white-space: nowrap;
  }

  .big .caret {
    display: inline-block;
    vertical-align: middle;
  }

  .mid {
    width: 68px;
  }

  .last {
    width: 52px;
  }

  .cells {
    width: 94px;
    padding-left: 11px;
  }

  .cells .stack {
    gap: 1px;
  }

  .editing {
    width: 169px;
  }

  .editing .body {
    justify-content: flex-end;
    padding-right: 4px;
  }

  .editing .big {
    width: 74px;
  }

  .mind {
    width: 90px;
  }

  .mind .body {
    justify-content: center;
  }

  .tail {
    display: flex;
    flex: 1;
    align-items: flex-end;
    justify-content: center;
    padding: 0 0 2px 8px;
  }

  .formula {
    display: flex;
    align-items: center;
    height: 44px;
    flex: none;
    box-sizing: border-box;
    padding: 2px 0 0 5px;
  }

  .namebox,
  .fx,
  .bar {
    box-sizing: border-box;
    display: flex;
    align-items: center;
    height: 24px;
    border: 1px solid #c8c8c8;
    background: #fdfdfd;
    font-size: 12px;
  }

  .namebox {
    width: 95px;
    padding: 0 5px 0 6px;
  }

  .namebox input,
  .bar input {
    flex: 1;
    min-width: 0;
  }

  .dots {
    width: 2px;
    height: 11px;
    margin: 0 13px;
    background: repeating-linear-gradient(#a5a5a5 0 2px, transparent 2px 4px);
  }

  .fx {
    width: 103px;
  }

  .fx button {
    flex: 1;
  }

  .fn {
    font-family: 'Liberation Serif', serif;
    font-size: 15px;
    color: #555;
  }

  .fn sub {
    font-size: 11px;
    vertical-align: baseline;
  }

  .bar {
    flex: 1;
    margin-left: 3px;
    padding: 0 4px 0 10px;
    border-right: none;
  }

  .sheet {
    display: flex;
    flex: 1;
    min-height: 0;
    font-family: Lato, 'Open Sans', sans-serif;
    font-size: 12px;
    line-height: 16px;
    color: #111;
  }

  .grid {
    position: relative;
    flex: 1;
    min-width: 0;
    overflow: hidden;
  }

  table {
    width: 1260px;
    table-layout: fixed;
    border-collapse: separate;
    border-spacing: 0;
    background: #fff;
  }

  .corner-col {
    width: 24px;
  }

  th,
  td {
    box-sizing: border-box;
    padding: 0;
    text-align: center;
    vertical-align: middle;
    overflow: hidden;
  }

  th {
    background: #e6e6e6;
    font-weight: 400;
    color: #333;
  }

  thead th {
    height: 18px;
    border-right: 1px solid #bdbdbd;
    border-bottom: 1px solid #a6a6a6;
  }

  thead th.current {
    background: #d2d2d2;
    border-bottom: 2px solid #217346;
    color: #217346;
  }

  .corner svg {
    margin-left: 11px;
  }

  tbody th {
    vertical-align: bottom;
    border-right: 1px solid #a6a6a6;
    border-bottom: 1px solid #c6c6c6;
  }

  tbody th.current {
    background: #d2d2d2;
    border-right: 2px solid #217346;
    color: #217346;
  }

  .line-l {
    border-left: 1px solid #000;
  }

  .line-t {
    border-top: 1px solid #000;
  }

  .bold {
    font-size: 11px;
    font-weight: 700;
  }

  .head {
    padding: 0 4px;
    border-top: 1px solid #000;
    background: #00b050;
    font-size: 11px;
    font-weight: 700;
    line-height: 18px;
  }

  .total {
    background: #00b050;
    font-size: 11px;
    font-weight: 700;
  }

  .title {
    font-size: 14px;
    font-weight: 700;
  }

  .gold {
    background: #ffc000;
  }

  .orange {
    background: #ed7d31;
  }

  .gray {
    background: #a5a5a5;
  }

  .yellow {
    background: #ffff00;
  }

  .edit {
    overflow: visible;
  }

  .editor {
    position: relative;
    box-sizing: border-box;
    height: 18px;
    border: 2px solid #217346;
    background: #fff;
  }

  .editor input {
    display: block;
    width: 14px;
    height: 14px;
    border-right: 1px solid #000;
  }

  .editor i {
    position: absolute;
    right: -3px;
    bottom: -3px;
    width: 4px;
    height: 4px;
    background: #217346;
  }

  .chart {
    position: absolute;
    left: 450px;
    top: 43px;
    font-size: 10px;
    fill: #555;
  }

  .chart-title {
    font-size: 14px;
  }

  .cursor {
    position: absolute;
    left: 1137px;
    top: 187px;
  }

  .vscroll {
    display: flex;
    flex-direction: column;
    width: 12px;
    padding: 2px 0 0 3px;
    border-left: 1px solid #a6a6a6;
  }

  .vscroll button {
    width: 12px;
    height: 14px;
    border: 1px solid #ababab;
    border-right: none;
    background: #fff;
    color: #666;
  }

  .vscroll .track {
    flex: 1;
    background: #d6d6d6;
  }

  .vscroll .thumb {
    box-sizing: border-box;
    height: 61px;
    border: 1px solid #ababab;
    border-right: none;
    background: #fff;
  }

  .sheetbar {
    display: flex;
    align-items: center;
    height: 27px;
    flex: none;
    box-sizing: border-box;
    border-top: 1px solid #a6a6a6;
    border-bottom: 1px solid #c0c0c0;
  }

  .arrows {
    display: flex;
    gap: 22px;
    width: 94px;
    box-sizing: border-box;
    padding-left: 26px;
  }

  .sheettab {
    align-self: flex-start;
    height: 23px;
    padding: 0 2px 1px;
    background: #fff;
    border-bottom: 2px solid #217346;
    color: #217346;
    font-size: 12px;
    font-weight: 700;
  }

  .sheettab span {
    padding: 2px 7px;
    background: linear-gradient(#fff, #ff8f92);
  }

  .add {
    margin-left: 31px;
  }

  .push {
    margin-left: auto;
  }

  .hscroll {
    display: flex;
    width: 478px;
    height: 14px;
    margin-right: 15px;
  }

  .hscroll button {
    width: 14px;
    height: 14px;
    border: 1px solid #ababab;
    background: #fff;
  }

  .hscroll .track {
    flex: 1;
    background: #d9d9d9;
  }

  .hscroll .thumb {
    box-sizing: border-box;
    width: 84%;
    height: 14px;
    margin-left: auto;
    border: 1px solid #ababab;
    background: #fff;
  }

  .status {
    display: flex;
    align-items: center;
    height: 20px;
    flex: none;
    box-sizing: border-box;
    padding: 0 8px 2px;
    background: #f1f1f1;
  }

  .mode {
    margin-right: auto;
  }

  .status > button {
    width: 13px;
    margin-right: 25px;
  }

  .zoom {
    display: flex;
    align-items: center;
    gap: 5px;
    margin: 0 9px 0 -9px;
    color: #999;
  }

  .zoom button {
    width: 8px;
    font-size: 14px;
  }

  .zoom input {
    appearance: none;
    width: 94px;
    height: 10px;
    background: linear-gradient(#b5b5b5, #b5b5b5) center / 100% 1px no-repeat;
  }

  .zoom input::-webkit-slider-thumb {
    appearance: none;
    width: 1px;
    height: 6px;
    background: #999;
  }

  .level {
    width: 22px;
    color: #a6a6a6;
  }

  .taskbar {
    display: flex;
    align-items: center;
    height: 30px;
    flex: none;
    box-sizing: border-box;
    border-bottom: 2px solid #b5b5b5;
    background: #ededed;
    color: #111;
  }

  .taskbar > button {
    width: 34px;
    height: 28px;
  }

  .bars {
    width: 1px;
    height: 14px;
    margin: 0 12px 0 5px;
    border: solid #444;
    border-width: 0 1px;
    padding-left: 1px;
  }

  .taskbar .app {
    width: 28px;
    margin-right: 8px;
    border-bottom: 2px solid #1572cc;
  }

  .taskbar .open {
    width: 32px;
    margin-right: 5px;
    background: #fafafa;
  }

  .tray {
    display: flex;
    align-items: center;
    margin-left: auto;
  }

  .tray button {
    width: 23px;
  }

  .tray .help {
    width: 30px;
  }

  .tray .people {
    width: 30px;
  }

  .tray .up {
    width: 22px;
  }

  .tray .keys {
    width: 28px;
  }

  .lang {
    width: 36px;
    text-align: center;
  }

  .clock {
    width: 64px;
    text-align: center;
  }

  .tray .notes {
    width: 41px;
    margin-right: 5px;
  }

  .mask {
    position: absolute;
    right: 151px;
    top: 15px;
    width: 209px;
    height: 118px;
    background: #000;
  }
</style>
